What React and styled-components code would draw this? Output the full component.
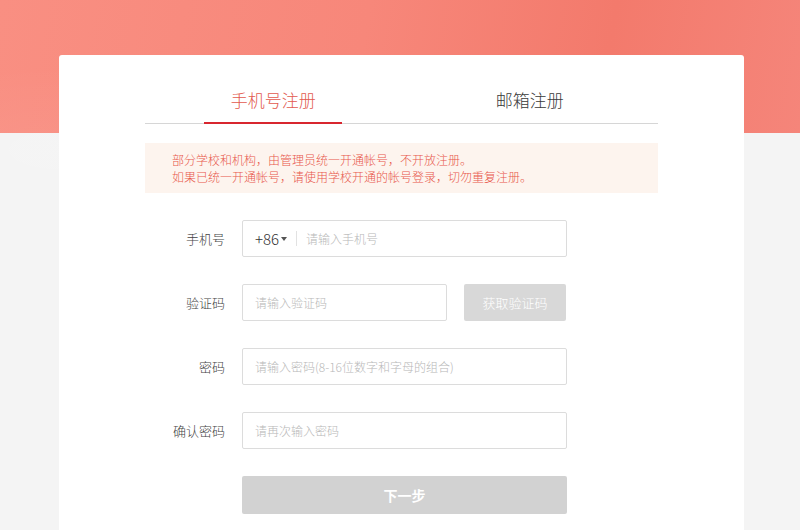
import React, { useState } from 'react';
import styled, { createGlobalStyle } from 'styled-components';

const GlobalStyle = createGlobalStyle`
    html, body {
        margin: 0;
        padding: 0;
    }
    body {
        font-family: "Noto Sans CJK SC", "Noto Sans", "Liberation Sans", sans-serif;
        background-color: #f4f4f4;
    }
    * {
        box-sizing: border-box;
    }
`;

const StyledPage = styled.div`
    min-height: 530px;
    padding-top: 55px;
    overflow: hidden;
    background:
        radial-gradient(ellipse 320px 120px at 60px 150px, rgba(255, 255, 255, 0.06), rgba(255, 255, 255, 0) 70%),
        linear-gradient(100deg, #f98f82 0%, #f7877a 45%, #f37a6c 75%, #f5857a 100%) top left / 100% 133px no-repeat,
        #f4f4f4;
`;

const StyledCard = styled.div`
    width: 685px;
    min-height: 480px;
    margin-left: 59px;
    background-color: #fff;
    border-radius: 3px;
    padding: 0 86px;
`;

const StyledTabs = styled.div`
    display: flex;
    border-bottom: 1px solid #d6d6d6;
`;

const StyledTab = styled.div`
    position: relative;
    flex: 1;
    display: flex;
    justify-content: center;
    padding: 34px 0 12px;
    font-size: 17px;
    font-weight: 300;
    line-height: 22px;
    color: ${props => props.active ? '#e2594e' : '#3a3a3a'};
    cursor: pointer;

    &::after {
        content: '';
        display: ${props => props.active ? 'block' : 'none'};
        position: absolute;
        left: 50%;
        bottom: -1px;
        width: 138px;
        height: 2px;
        margin-left: -69px;
        background-color: #d8262f;
    }
`;

const StyledNotice = styled.div`
    margin-top: 19px;
    padding: 8px 27px;
    background-color: #fdf4ee;
    color: #e8574b;
    font-size: 12px;
    font-weight: 300;
    line-height: 17px;
`;

const StyledForm = styled.form`
    display: flex;
    flex-direction: column;
    gap: 27px;
    margin-top: 27px;
`;

const StyledRow = styled.div`
    display: flex;
    align-items: center;
    gap: 17px;
`;

const StyledLabel = styled.label`
    width: 80px;
    text-align: right;
    font-size: 13px;
    font-weight: 300;
    color: #444;
`;

const StyledField = styled.div`
    display: flex;
    align-items: center;
    width: ${props => props.width || 325}px;
    height: 37px;
    border: 1px solid #dcdcdc;
    border-radius: 2px;
    background-color: #fff;
    padding: 0 12px;
`;

const StyledInput = styled.input`
    flex: 1;
    min-width: 0;
    border: none;
    outline: none;
    font-family: inherit;
    font-size: 12px;
    font-weight: 300;
    color: #333;
    background: transparent;
    padding: 0;

    &::placeholder {
        color: #b8b8b8;
    }
`;

const StyledCode = styled.span`
    display: flex;
    align-items: center;
    font-size: 15px;
    font-weight: 300;
    color: #333;
    padding-right: 9px;
    margin-right: 9px;
    border-right: 1px solid #e2e2e2;
    line-height: 15px;
`;

const StyledCaret = styled.span`
    margin-left: 2px;
    width: 0;
    height: 0;
    border-left: 3px solid transparent;
    border-right: 3px solid transparent;
    border-top: 4px solid #555;
`;

const StyledButton = styled.button`
    width: ${props => props.width || 325}px;
    height: ${props => props.tall ? 38 : 37}px;
    margin-left: ${props => props.offset || 0}px;
    border: none;
    border-radius: 2px;
    background-color: ${props => props.tall ? '#d2d2d2' : '#d8d8d8'};
    color: #fff;
    font-family: inherit;
    font-size: ${props => props.tall ? 14 : 13}px;
    font-weight: ${props => props.tall ? 700 : 300};
    cursor: not-allowed;
`;

const tabs = ['手机号注册', '邮箱注册'];

const App = () => {
    const [activeTab, setActiveTab] = useState(0);

    return (
        <>
            <GlobalStyle />
            <StyledPage>
                <StyledCard>
                    <StyledTabs>
                        {tabs.map((tab, i) => (
                            <StyledTab
                                key={tab}
                                active={i === activeTab}
                                onClick={() => setActiveTab(i)}
                            >
                                {tab}
                            </StyledTab>
                        ))}
                    </StyledTabs>
                    <StyledNotice>
                        部分学校和机构，由管理员统一开通帐号，不开放注册。
                        <br />
                        如果已统一开通帐号，请使用学校开通的帐号登录，切勿重复注册。
                    </StyledNotice>
                    <StyledForm onSubmit={e => e.preventDefault()}>
                        <StyledRow>
                            <StyledLabel>手机号</StyledLabel>
                            <StyledField>
                                <StyledCode>
                                    +86
                                    <StyledCaret />
                                </StyledCode>
                                <StyledInput placeholder="请输入手机号" />
                            </StyledField>
                        </StyledRow>
                        <StyledRow>
                            <StyledLabel>验证码</StyledLabel>
                            <StyledField width={205}>
                                <StyledInput placeholder="请输入验证码" />
                            </StyledField>
                            <StyledButton type="button" width={102}>
                                获取验证码
                            </StyledButton>
                        </StyledRow>
                        <StyledRow>
                            <StyledLabel>密码</StyledLabel>
                            <StyledField>
                                <StyledInput
                                    type="password"
                                    placeholder="请输入密码(8-16位数字和字母的组合)"
                                />
                            </StyledField>
                        </StyledRow>
                        <StyledRow>
                            <StyledLabel>确认密码</StyledLabel>
                            <StyledField>
                                <StyledInput type="password" placeholder="请再次输入密码" />
                            </StyledField>
                        </StyledRow>
                        <StyledRow>
                            <StyledButton type="submit" tall offset={97}>
                                下一步
                            </StyledButton>
                        </StyledRow>
                    </StyledForm>
                </StyledCard>
            </StyledPage>
        </>
    );
};

export default App;
